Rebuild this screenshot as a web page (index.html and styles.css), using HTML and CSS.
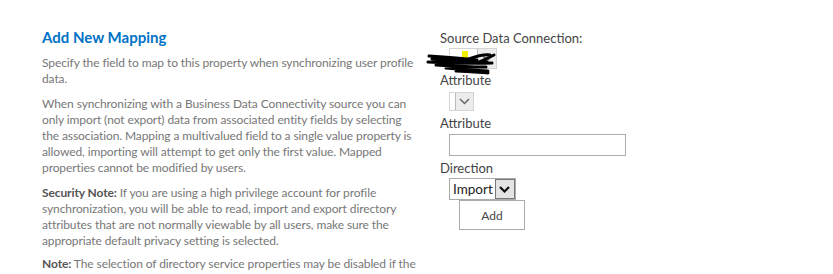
FILE: index.html
```html
<!DOCTYPE html>
<html lang="en">
<head>
    <meta charset="UTF-8">
    <title>Add New Mapping</title>
    <link rel="stylesheet" href="styles.css">
</head>
<body>
    <div class="mapping">
        <div class="description">
            <h2>Add New Mapping</h2>
            <p>Specify the field to map to this property when synchronizing user profile<br>data.</p>
            <p>When synchronizing with a Business Data Connectivity source you can<br>only import (not export) data from associated entity fields by selecting<br>the association. Mapping a multivalued field to a single value property is<br>allowed, importing will attempt to get only the first value. Mapped<br>properties cannot be modified by users.</p>
            <p><b>Security Note:</b> If you are using a high privilege account for profile<br>synchronization, you will be able to read, import and export directory<br>attributes that are not normally viewable by all users, make sure the<br>appropriate default privacy setting is selected.</p>
            <p><b>Note:</b> The selection of directory service properties may be disabled if the</p>
        </div>
        <div class="fields">
            <div class="label">Source Data Connection:</div>
            <div class="field">
                <div class="select source">
                    <span class="value"><span class="marker"></span></span>
                    <span class="arrow light"><svg width="11" height="7" viewBox="0 0 11 7"><path d="M1 1l4.5 4.5L10 1" fill="none" stroke="#666" stroke-width="1.5"/></svg></span>
                </div>
                <svg class="scribble" width="80" height="24" viewBox="0 0 80 24">
                    <path d="M3 5c15 1 30 2 48 4M6 8c18 2 35 3 55 3M2 11c22 1 40 2 64 1M10 14c16 1 30 2 50 2M20 17c12 1 24 2 42 3M30 20c10 0 20 1 32 2M40 9c8-3 16-6 24-5M50 12c6-2 12-5 18-8" fill="none" stroke="#000" stroke-width="3" stroke-linecap="round"/>
                </svg>
            </div>
            <div class="label">Attribute</div>
            <div class="field">
                <div class="select empty">
                    <span class="arrow light"><svg width="11" height="7" viewBox="0 0 11 7"><path d="M1 1l4.5 4.5L10 1" fill="none" stroke="#666" stroke-width="1.5"/></svg></span>
                </div>
            </div>
            <div class="label">Attribute</div>
            <div class="field">
                <input class="text" type="text">
            </div>
            <div class="label">Direction</div>
            <div class="field">
                <div class="select direction">
                    <span class="value">Import</span>
                    <span class="arrow"><svg width="11" height="7" viewBox="0 0 11 7"><path d="M1 1l4.5 4.5L10 1" fill="none" stroke="#111" stroke-width="2.2"/></svg></span>
                </div>
            </div>
            <button class="add">Add</button>
        </div>
    </div>
</body>
</html>
```

FILE: styles.css
```css
body {
    margin: 0;
    background: #ffffff;
    font-family: 'Lato', 'Open Sans', sans-serif;
    overflow: hidden;
}
.mapping {
    display: flex;
    padding-top: 27px;
}
.description {
    width: 360px;
    padding-left: 42px;
    color: #777777;
    font-size: 12px;
    letter-spacing: -0.1px;
    line-height: 16px;
    white-space: nowrap;
}
.description h2 {
    margin: 0 0 8px;
    font-size: 15px;
    line-height: 20px;
    font-weight: bold;
    color: #0072c6;
    letter-spacing: 0;
}
.description p {
    margin: 0 0 9px;
}
.description p:nth-of-type(3) {
    margin-bottom: 7px;
}
.description b {
    color: #555555;
}
.fields {
    margin-left: 38px;
    padding-top: 2px;
    color: #444444;
    font-size: 13px;
}
.label {
    line-height: 18px;
}
.field {
    position: relative;
    padding-left: 9px;
}
.select {
    display: inline-flex;
    border: 1px solid #d4d4d4;
    background: #ffffff;
    box-sizing: border-box;
}
.select .arrow {
    display: flex;
    align-items: center;
    justify-content: center;
    width: 18px;
    background: #e8e8e8;
    border-left: 1px solid #bbbbbb;
}
.select .arrow.light {
    background: #ececec;
}
.source {
    width: 48px;
    height: 21px;
    margin-top: 1px;
}
.source .value {
    flex: 1;
    position: relative;
}
.marker {
    position: absolute;
    left: 12px;
    top: 2px;
    width: 6px;
    height: 7px;
    background: #f2f200;
}
.scribble {
    position: absolute;
    left: -14px;
    top: 4px;
}
.empty {
    width: 25px;
    height: 19px;
    margin: 3px 0 3px;
}
.empty .arrow {
    width: 18px;
    margin-left: 5px;
}
.text {
    display: block;
    width: 177px;
    height: 22px;
    margin: 2px 0 3px;
    border: 1px solid #ababab;
    box-sizing: border-box;
    padding: 0;
}
.direction {
    height: 22px;
    margin-top: 1px;
    border-color: #ababab;
}
.direction .value {
    padding: 0 2px 0 3px;
    line-height: 20px;
    font-size: 13.5px;
    color: #222222;
}
.direction .arrow {
    background: #e4e4e4;
    border: 1px solid #777777;
}
.add {
    display: block;
    margin-left: 19px;
    width: 66px;
    height: 30px;
    background: #ffffff;
    border: 1px solid #ababab;
    font-family: 'Lato', sans-serif;
    font-size: 12px;
    color: #444444;
    padding: 0;
}
```
